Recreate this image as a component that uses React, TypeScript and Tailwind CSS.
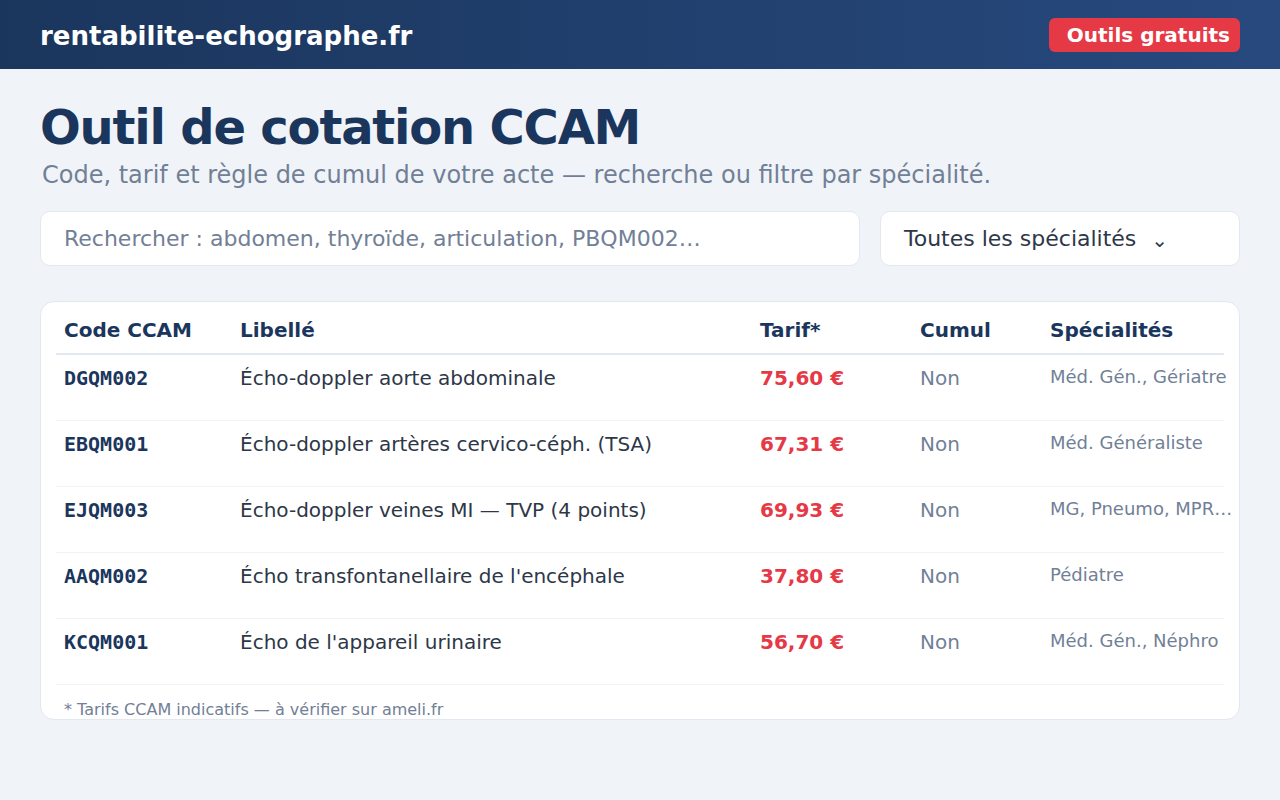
import React from "react";

const rows = [
  { code: "DGQM002", label: "Écho-doppler aorte abdominale", tarif: "75,60 €", cumul: "Non", spec: "Méd. Gén., Gériatre" },
  { code: "EBQM001", label: "Écho-doppler artères cervico-céph. (TSA)", tarif: "67,31 €", cumul: "Non", spec: "Méd. Généraliste" },
  { code: "EJQM003", label: "Écho-doppler veines MI — TVP (4 points)", tarif: "69,93 €", cumul: "Non", spec: "MG, Pneumo, MPR…" },
  { code: "AAQM002", label: "Écho transfontanellaire de l'encéphale", tarif: "37,80 €", cumul: "Non", spec: "Pédiatre" },
  { code: "KCQM001", label: "Écho de l'appareil urinaire", tarif: "56,70 €", cumul: "Non", spec: "Méd. Gén., Néphro" },
];

const cols = "grid grid-cols-[176px_520px_160px_130px_182px]";

export default function App() {
  return (
    <div className="min-h-[800px] bg-[#f0f4f8] font-['DejaVu_Sans',sans-serif]">
      <header className="h-[69px] bg-gradient-to-r from-[#1b365d] to-[#27497e] flex items-center justify-between px-10">
        <div className="text-[26px] font-bold text-white leading-none mt-[2px]">rentabilite-echographe.fr</div>
        <div className="h-[34px] mt-[1px] flex items-center bg-[#e63946] rounded-md pl-[18px] pr-[10px] text-white font-bold text-[20px]">
          Outils gratuits
        </div>
      </header>
      <main className="px-10">
        <h1 className="mt-[29px] text-[48px] leading-[58px] font-bold text-[#1b365d] tracking-[-1.2px]">
          Outil de cotation CCAM
        </h1>
        <p className="mt-[4px] ml-[2px] text-[24px] leading-[30px] text-[#718096]">
          Code, tarif et règle de cumul de votre acte — recherche ou filtre par spécialité.
        </p>
        <div className="mt-[21px] grid grid-cols-[1fr_360px] gap-5">
          <div className="h-[55px] bg-white border border-[#e2e8f0] rounded-[10px] flex items-center pl-[23px] text-[22px] text-[#718096]">
            Rechercher : abdomen, thyroïde, articulation, PBQM002…
          </div>
          <div className="h-[55px] bg-white border border-[#e2e8f0] rounded-[10px] flex items-center pl-[23px] text-[22px] text-[#2d3748]">
            Toutes les spécialités
            <span className="ml-[15px] text-[20px] mt-[2px]">⌄</span>
          </div>
        </div>
        <div className="mt-[35px] bg-white border border-[#e2e8f0] rounded-[14px] px-[15px] pt-[16px]">
          <div className={`${cols} border-b-2 border-[#e2e8f0] pb-[11px] text-[20px] leading-[24px] font-bold text-[#1b365d]`}>
            <div className="pl-2">Code CCAM</div>
            <div className="pl-2">Libellé</div>
            <div className="pl-2">Tarif*</div>
            <div className="pl-2">Cumul</div>
            <div className="pl-2">Spécialités</div>
          </div>
          {rows.map((r) => (
            <div key={r.code} className={`${cols} h-[66px] border-b border-[#f0f2f6] pt-[11px] text-[20px] leading-[24px]`}>
              <div className="pl-2 font-['DejaVu_Sans_Mono',monospace] font-bold text-[#1b365d]">{r.code}</div>
              <div className="pl-2 text-[#2d3748]">{r.label}</div>
              <div className="pl-2 font-bold text-[#e63946]">{r.tarif}</div>
              <div className="pl-2 text-[#718096]">{r.cumul}</div>
              <div className="pl-2 text-[18px] leading-[22px] text-[#718096] whitespace-nowrap">{r.spec}</div>
            </div>
          ))}
          <div className="pt-[15px] pl-2 text-[16px] leading-[19px] text-[#718096]">
            * Tarifs CCAM indicatifs — à vérifier sur ameli.fr
          </div>
        </div>
      </main>
    </div>
  );
}
